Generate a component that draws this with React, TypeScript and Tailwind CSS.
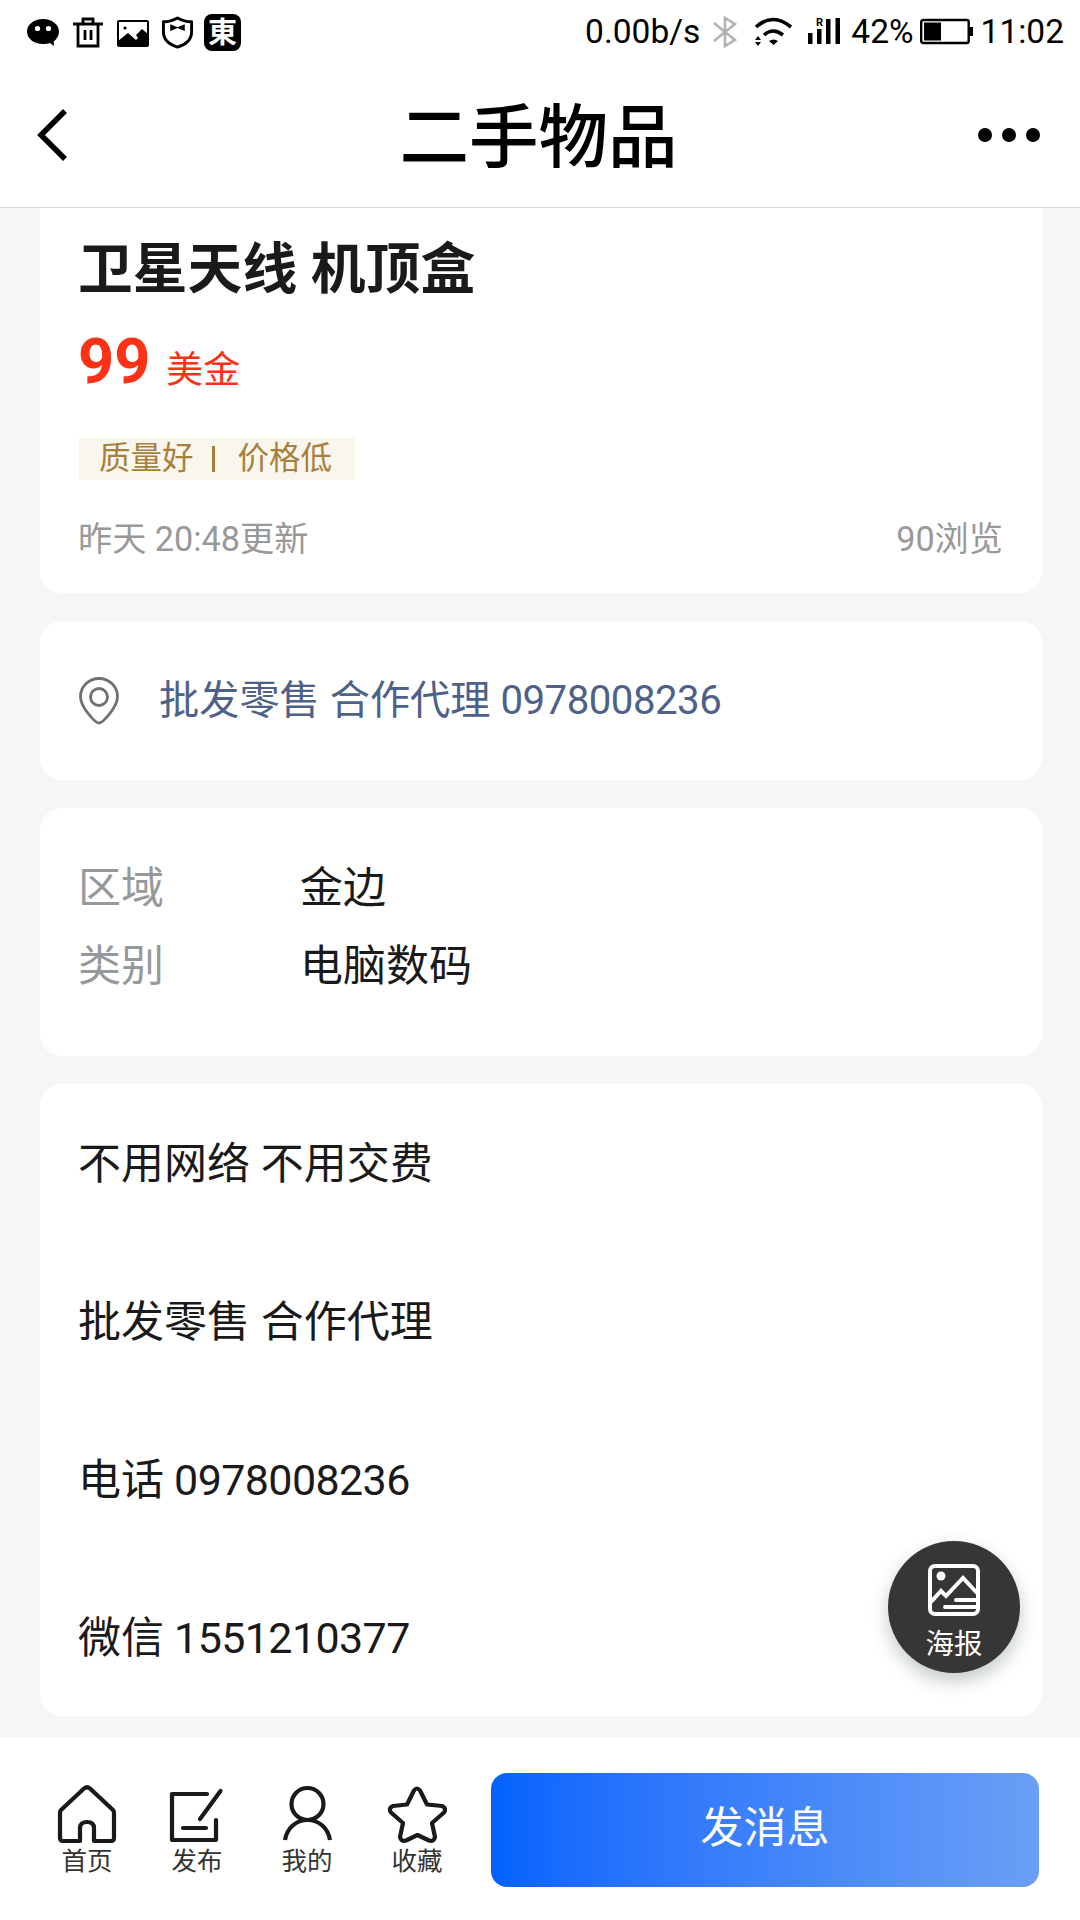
import type { ReactNode } from "react";

const details = [
    { label: "区域", value: "金边" },
    { label: "类别", value: "电脑数码" },
];

const description = [
    { text: "不用网络 不用交费" },
    { text: "批发零售 合作代理" },
    { text: "电话", number: "0978008236" },
    { text: "微信", number: "1551210377" },
];

function StatusBar() {
    return (
        <div className="flex h-[64px] items-center justify-between pl-[26px] pr-[16px] text-black">
            <div className="flex items-center">
                {/* chat */}
                <svg width="34" height="32" viewBox="0 0 34 32">
                    <path d="M17 3C8 3 1 8.500 1 15.500S8 28 17 28c2.500 0 5-.4 7-1.100L28 30l-.3-4.600C31 23 33 19.500 33 15.500 33 8.500 26 3 17 3Z" />
                    <circle cx="11.500" cy="12.500" r="2.600" fill="#fff" />
                    <circle cx="22.500" cy="12.500" r="2.600" fill="#fff" />
                </svg>
                {/* trash */}
                <svg className="ml-[12px]" width="32" height="32" viewBox="0 0 32 32" fill="none" stroke="#000" strokeWidth="2.800">
                    <path d="M1 8h30M11 7V3h10v4M6 8v22h20V8M13 14v10M19 14v10" />
                </svg>
                {/* picture */}
                <svg className="ml-[13px]" width="32" height="32" viewBox="0 0 32 32">
                    <rect x="1" y="5" width="30" height="25" rx="1" fill="none" stroke="#000" strokeWidth="2" />
                    <circle cx="8" cy="12" r="1.600" />
                    <path d="M1 25 11 17l8 7 2-2-2-3 6-6 6 5v12H1Z" />
                </svg>
                {/* shield */}
                <svg className="ml-[12px]" width="33" height="34" viewBox="0 0 34 34" fill="none" stroke="#000" strokeWidth="3">
                    <path d="M17 2.500Q10 6.500 2.500 6.500V17C2.500 25 9 30 17 32.500 25 30 31.500 25 31.500 17V6.500Q24 6.500 17 2.500Z" strokeLinejoin="round" />
                    <path d="M9.500 9v7L17 13l7.500 3V9L17 12Z" fill="#000" stroke="none" />
                </svg>
                <div className="ml-[10px] flex size-[37px] items-center justify-center rounded-[8px] bg-black pt-[3px] text-[29px] leading-none font-bold text-white">
                    東
                </div>
            </div>
            <div className="flex items-center text-[33.500px] leading-[40px]">
                <span>0.00b/s</span>
                {/* bluetooth */}
                <svg className="ml-[13px]" width="24" height="32" viewBox="0 0 24 32" fill="none" stroke="#b2b2b2" strokeWidth="2.600">
                    <path d="M1 7l21 17-10 6V2l10 6L1 25" />
                </svg>
                {/* wifi */}
                <svg className="ml-[16px]" width="40" height="32" viewBox="0 0 40 32">
                    <path d="M3 11Q20-4 38 11" fill="none" stroke="#000" strokeWidth="3.600" />
                    <path d="M11 19Q20 11 30 19" fill="none" stroke="#000" strokeWidth="3.600" />
                    <path d="M16 25q4.500-3 9 0l-4.500 4Z M2 24h6l-3-4Z M2 26h6l-3 4Z" />
                </svg>
                {/* signal, roaming */}
                <svg className="ml-[14px]" width="34" height="32" viewBox="0 0 34 32">
                    <path d="M1 17h4.500v11H1Zm9-4h4.500v15H10Zm9-10h4.500v25H19Zm9.500-1H33v26h-4.500Z" />
                    <text x="9" y="10" fontSize="11" fontWeight="700">R</text>
                </svg>
                <span className="ml-[10px]">42%</span>
                {/* battery */}
                <svg className="ml-[6px]" width="53" height="28" viewBox="0 0 53 28">
                    <rect x="1.200" y="2" width="47.500" height="23" rx="2" fill="none" stroke="#000" strokeWidth="2.400" />
                    <rect x="4" y="4.500" width="17" height="18" />
                    <rect x="49" y="9" width="4" height="9" />
                </svg>
                <span className="ml-[8px]">11:02</span>
            </div>
        </div>
    );
}

function NavItem({ label, children }: { label: string; children: ReactNode }) {
    return (
        <div className="flex w-[110px] flex-col items-center">
            <svg width="60" height="60" viewBox="0 0 60 60" fill="none" stroke="#1a1a1a" strokeWidth="4.200" strokeLinecap="round" strokeLinejoin="round">
                {children}
            </svg>
            <span className="mt-px text-[25.500px] leading-[30px] text-[#333]">{label}</span>
        </div>
    );
}

export default function App() {
    return (
        <div className="relative flex h-[1920px] w-[1080px] flex-col overflow-hidden bg-[#f6f6f6] font-['Roboto','Noto_Sans_CJK_SC',sans-serif] text-[#1a1a1a]">
            <header className="h-[208px] shrink-0 border-b border-[#d8d8d8] bg-white">
                <StatusBar />
                <div className="flex h-[142px] items-center justify-between pl-[36px] pr-[40px] text-black">
                    <svg width="63" height="54" viewBox="0 0 63 54" fill="none" stroke="currentColor" strokeWidth="5.500">
                        <path d="M29 3 5 27l24 24" />
                    </svg>
                    <h1 className="pt-[7px] text-[69.500px] leading-[80px] font-medium">二手物品</h1>
                    <div className="flex gap-[10px]">
                        <span className="size-[14px] rounded-full bg-black" />
                        <span className="size-[14px] rounded-full bg-black" />
                        <span className="size-[14px] rounded-full bg-black" />
                    </div>
                </div>
            </header>

            <main className="flex flex-1 flex-col gap-[28px] pr-[38px] pl-[40px]">
                {/* Title and price */}
                <section className="h-[385px] rounded-b-[22px] bg-white pt-[28px] pr-[39px] pl-[38px]">
                    <h2 className="text-[54.800px] leading-[66px] font-bold">卫星天线 机顶盒</h2>
                    <div className="mt-[24px] flex h-[72px] items-baseline text-[#fc3116]">
                        <span className="text-[63px] leading-[72px] font-bold">99</span>
                        <span className="ml-[16px] text-[37px] leading-[44px]">美金</span>
                    </div>
                    <div className="mt-[40px] ml-px flex h-[42px] w-[276px] items-center bg-[#f9f7ed] pl-[20px] text-[31.500px] leading-[42px] text-[#a9803b]">
                        <span>质量好</span>
                        <span className="mr-[23px] ml-[18px] h-[26px] w-[3px] bg-[#a9803b]" />
                        <span>价格低</span>
                    </div>
                    <div className="mt-[37px] flex justify-between text-[34.200px] leading-[44px] text-[#999]">
                        <span>昨天 20:48更新</span>
                        <span>90浏览</span>
                    </div>
                </section>

                {/* Location */}
                <section className="flex h-[159px] items-center rounded-[22px] bg-white px-[39px] text-[#4d6189]">
                    <svg width="40" height="48" viewBox="0 0 40 48" fill="none" stroke="#707070" strokeWidth="2.800">
                        <path d="M20 46C17 46 1.500 31 1.500 19.500a18.500 18 0 0 1 37 0C38.500 31 23 46 20 46Z" />
                        <circle cx="20" cy="20" r="8.500" />
                    </svg>
                    <span className="ml-[40px] pt-px text-[40.200px] leading-[48px]">
                        批发零售 合作代理 <span className="tracking-[-0.500px]">0978008236</span>
                    </span>
                </section>

                {/* Details */}
                <section className="h-[248px] rounded-[22px] bg-white px-[38px] pt-[41px] text-[43px] leading-[78px]">
                    {details.map((row) => (
                        <div key={row.label} className="flex">
                            <span className="w-[222px] text-[#96999c]">{row.label}</span>
                            <span>{row.value}</span>
                        </div>
                    ))}
                </section>

                {/* Description */}
                <section className="h-[632px] rounded-[22px] bg-white px-[38px] pt-px text-[43px] leading-[158px]">
                    {description.map((line) => (
                        <p key={line.number ?? line.text}>
                            {line.text}
                            {line.number && <span className="tracking-[-0.600px]"> {line.number}</span>}
                        </p>
                    ))}
                </section>
            </main>

            <footer className="flex h-[183px] shrink-0 items-start bg-white pt-[36px] pl-[32px]">
                <nav className="flex pt-[12px]">
                    <NavItem label="首页">
                        <path d="M27 3.500Q30 1 33 3.500L56 25q1 1 1 3V53q0 3-3 3H37V43q0-6-7-6t-7 6v13H6q-3 0-3-3V28q0-2 1-3Z" />
                    </NavItem>
                    <NavItem label="发布">
                        <path d="M40 9H5v46h44V35M53.500 6 33 34M16 43h23" />
                    </NavItem>
                    <NavItem label="我的">
                        <circle cx="30.500" cy="19" r="16" />
                        <path d="M8 55C10 43 19 35 30.500 35S51 43 53 55" strokeLinecap="butt" />
                    </NavItem>
                    <NavItem label="收藏">
                        <path d="M27 5.500q3-4 6 0l7 14 15 1.500q5 2 2 6.500L45 38l3 14q-1 5-6 3.500L30.500 50 19 55.500q-5 1.500-6-3.500l3-14L4 27.500q-3-4.500 2-6.500l14-1.500Z" />
                    </NavItem>
                </nav>
                <button className="ml-[19px] h-[114px] w-[548px] rounded-[16px] bg-linear-to-r from-[#0262fd] to-[#6a9ff5] pb-[3px] text-[43px] text-white">
                    发消息
                </button>
            </footer>

            {/* Floating poster button */}
            <button className="absolute top-[1541px] left-[888px] flex size-[132px] flex-col items-center rounded-full bg-[#363636] pt-[23px] text-white shadow-[0_8px_18px_rgba(60,80,80,0.3)]">
                <svg width="52" height="52" viewBox="0 0 52 52" fill="none" stroke="currentColor" strokeWidth="4">
                    <rect x="2" y="2" width="48" height="48" rx="5" />
                    <circle cx="13" cy="12" r="4.500" fill="currentColor" stroke="none" />
                    <path d="m3 38 10-11 5 5L35 14l14 15" />
                    <path d="M28 36h21M17 43h32" strokeLinecap="round" />
                </svg>
                <span className="mt-[11px] text-[28.500px] leading-[36px]">海报</span>
            </button>
        </div>
    );
}
